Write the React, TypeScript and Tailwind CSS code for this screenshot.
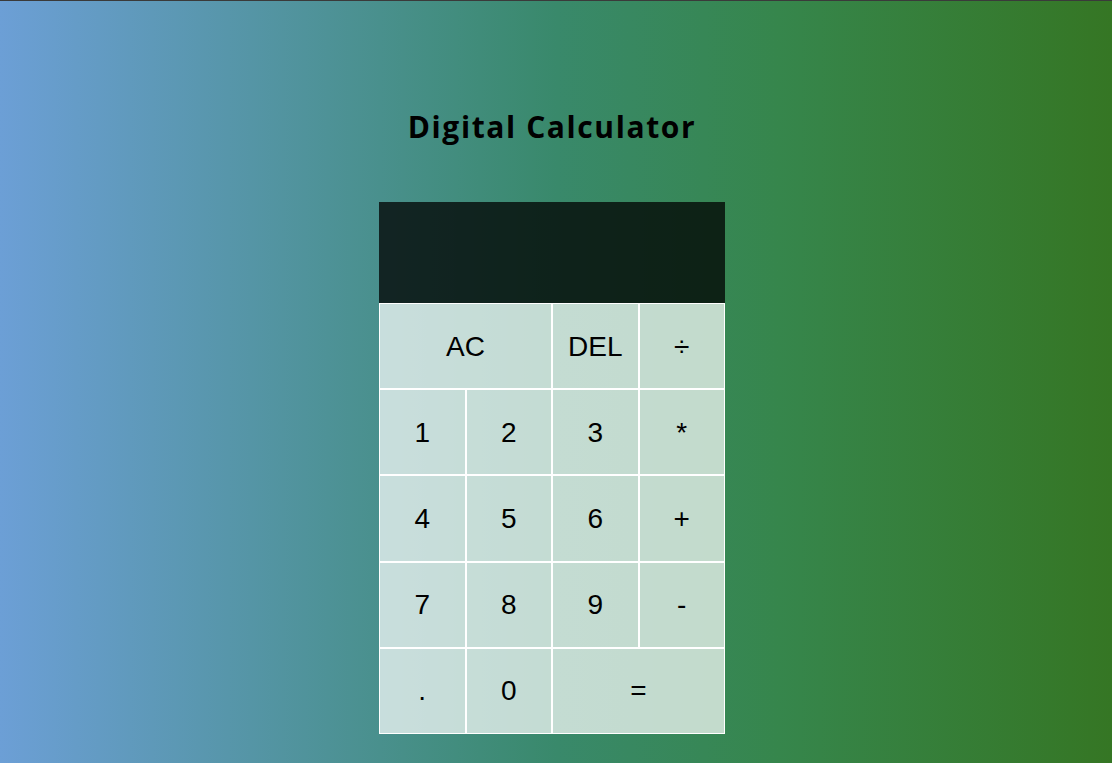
import React from "react";

const keys: { label: string; span?: string }[] = [
  { label: "AC", span: "col-span-2" },
  { label: "DEL" },
  { label: "÷" },
  { label: "1" },
  { label: "2" },
  { label: "3" },
  { label: "*" },
  { label: "4" },
  { label: "5" },
  { label: "6" },
  { label: "+" },
  { label: "7" },
  { label: "8" },
  { label: "9" },
  { label: "-" },
  { label: "." },
  { label: "0" },
  { label: "=", span: "col-span-2" },
];

export default function App() {
  return (
    <div className="min-h-[763px] w-full border-t border-[#3a3a3a] bg-[linear-gradient(to_right,#6c9fd6_0%,#39896b_50%,#36864c_70%,#357624_100%)]">
      <div className="flex flex-col items-center pr-[8px]">
        <h1 className="mt-[103px] text-[30px] leading-[46px] font-bold text-black [font-family:'Open_Sans',sans-serif] tracking-[1.6px]">
          Digital Calculator
        </h1>
        <div className="mt-[52px] w-[346px]">
          <div className="h-[101px] bg-black/75" />
          <div className="grid grid-cols-4">
            {keys.map((k) => (
              <button
                key={k.label}
                className={`${k.span ?? ""} h-[86.2px] border border-white bg-white/70 pt-px text-[28px] text-black [font-family:'Liberation_Sans',Arial,sans-serif] flex items-center justify-center`}
              >
                {k.label}
              </button>
            ))}
          </div>
        </div>
      </div>
    </div>
  );
}
